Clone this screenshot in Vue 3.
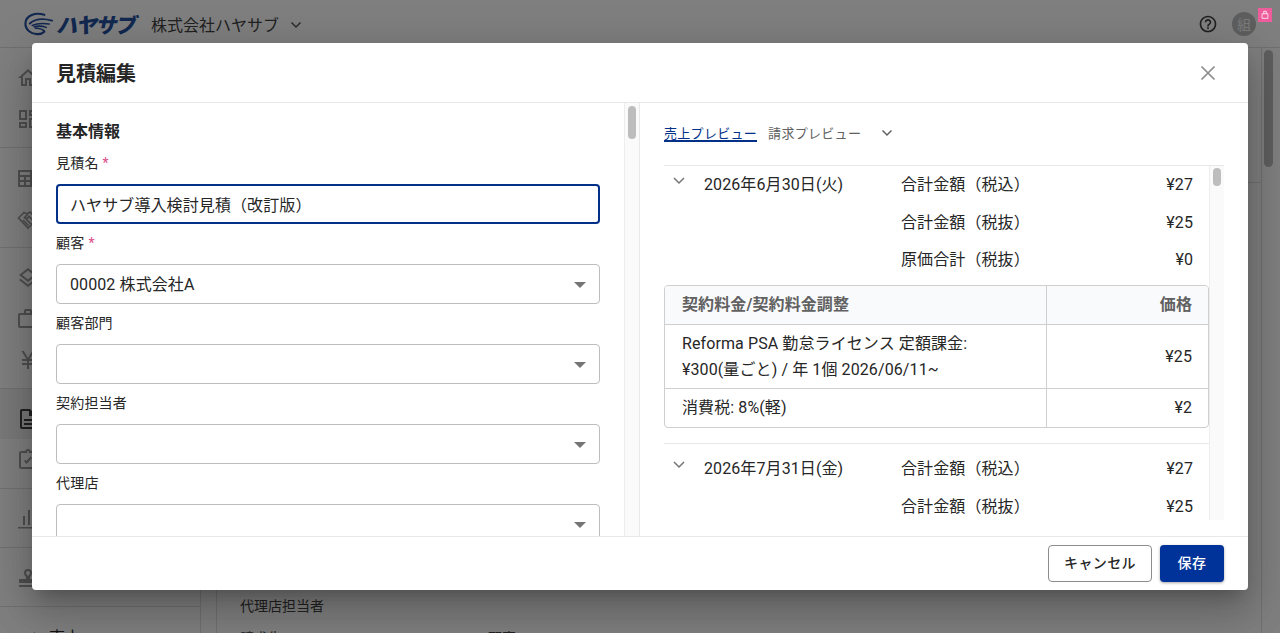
<script setup>
const navGroups = [
  [
    { icon: 'M12 5.69l5 4.5V18h-2v-6H9v6H7v-7.81l5-4.5M12 3L2 12h3v8h6v-6h2v6h6v-8h3L12 3z' },
    { icon: 'M19 5v2h-4V5h4M9 5v6H5V5h4m10 8v6h-4v-6h4M9 17v2H5v-2h4M21 3h-8v6h8V3zM11 3H3v10h8V3zm10 8h-8v10h8V11zm-10 4H3v6h8v-6z' },
  ],
  [
    { icon: 'M2 4h14v3h6v14H2V4zm2 2v3h10V6H4zm0 5v3h4v-3H4zm6 0v3h4v-3h-4zm-6 5v3h4v-3H4zm6 0v3h4v-3h-4zm6-7v10h4V9h-4z' },
    { line: true, icon: 'M2.500 11L8 5.500l3 1.500 3-2 7.500 6.500L12 21zM12 7L8.500 10.500c1 1.200 2.200 1.200 3.200.3L13 9.500l6 6M7 13l5.500 5.500M9.500 11.500l6 6' },
  ],
  [
    { icon: 'M11.990 18.540l-7.370-5.730L3 14.070l9 7 9-7-1.630-1.270-7.380 5.740zM12 16l7.360-5.730L21 9l-9-7-9 7 1.630 1.270L12 16zm0-11.470L17.740 9 12 13.470 6.260 9 12 4.530z' },
    { icon: 'M20 6h-4V4c0-1.110-.89-2-2-2h-4c-1.110 0-2 .89-2 2v2H4c-1.110 0-1.990.89-1.990 2L2 19c0 1.110.89 2 2 2h16c1.110 0 2-.89 2-2V8c0-1.110-.89-2-2-2zm-6 0h-4V4h4v2zm6 13H4V8h16v11z' },
    { icon: 'M5.500 3h2.300L12 10l4.200-7h2.300l-4.900 8H18v2h-5v2h5v2h-5v4h-2v-4H6v-2h5v-2H6v-2h4.400L5.500 3z' },
  ],
  [
    { icon: 'M8 16h8v2H8zm0-4h8v2H8zm6-10H6c-1.100 0-2 .9-2 2v16c0 1.100.89 2 1.990 2H18c1.100 0 2-.9 2-2V8l-6-6zm4 18H6V4h7v5h5v11z', active: true },
    { icon: 'M19 3h-4.180C14.400 1.840 13.300 1 12 1s-2.400.84-2.820 2H5c-1.100 0-2 .9-2 2v14c0 1.100.9 2 2 2h14c1.100 0 2-.9 2-2V5c0-1.100-.9-2-2-2zm-7 0c.55 0 1 .45 1 1s-.45 1-1 1-1-.45-1-1 .45-1 1-1zm7 16H5V5h14v14zM8 13l2.500 3 5.500-6-1.400-1.400-4.100 4.500-1.100-1.300L8 13z' },
  ],
  [{ icon: 'M2 20h19v1.500H2V20zM7 9h2v9H7V9zm5-6h2v15h-2V3zm5 8h2v7h-2v-7z' }],
  [{ icon: 'M12 3a4 4 0 0 1 4 4c0 1.500-1 3-2 4v2h7v4H3v-4h7v-2c-1-1-2-2.500-2-4a4 4 0 0 1 4-4zm0 2a2 2 0 0 0-2 2c0 1 1 2 2 3 1-1 2-2 2-3a2 2 0 0 0-2-2zM3 19h18v2H3v-2z' }],
]

const fields = [
  { label: '見積名', required: true, value: 'ハヤサブ導入検討見積（改訂版）', focused: true },
  { label: '顧客', required: true, value: '00002 株式会社A', select: true },
  { label: '顧客部門', select: true },
  { label: '契約担当者', select: true },
  { label: '代理店', select: true },
]

const sections = [
  {
    date: '2026年6月30日(火)',
    totals: [
      { label: '合計金額（税込）', value: '¥27' },
      { label: '合計金額（税抜）', value: '¥25' },
      { label: '原価合計（税抜）', value: '¥0' },
    ],
    lines: [
      { name: ['Reforma PSA 勤怠ライセンス 定額課金:', '¥300(量ごと) / 年 1個 2026/06/11~'], price: '¥25' },
      { name: ['消費税: 8%(軽)'], price: '¥2' },
    ],
  },
  {
    date: '2026年7月31日(金)',
    totals: [
      { label: '合計金額（税込）', value: '¥27' },
      { label: '合計金額（税抜）', value: '¥25' },
      { label: '原価合計（税抜）', value: '¥0' },
    ],
    lines: [],
  },
]
</script>

<template>
  <div class="page">
    <header class="app-header">
      <div class="logo">
        <svg class="logo__mark" viewBox="0 0 30 26" fill="none" stroke="#24509e" stroke-linecap="round">
          <path d="M21 3.500C12 .5 2 4 1.500 12c-.4 7 6 12 13 11.500 3 0 5-1 6.500-2.500" stroke-width="2.200" />
          <path d="M29 9.500C20 7 11 8 6 12.500" stroke-width="2" />
          <path d="M26 13C20 12 13 12.500 8.500 14.500" stroke-width="1.600" />
          <path d="M23 16.500c-4-1.500-9-1.500-12.500-.5" stroke-width="1.600" />
          <path d="M21 20c-3-2-6-3-9-2.500" stroke-width="1.600" />
        </svg>
        <span class="logo__text">ハヤサブ</span>
      </div>
      <span class="company">株式会社ハヤサブ</span>
      <svg class="company__chevron" viewBox="0 0 12 8" fill="none" stroke="#555" stroke-width="1.500">
        <path d="M1.500 1.500L6 6l4.500-4.500" />
      </svg>
      <div class="app-header__right">
        <svg class="help" viewBox="0 0 24 24" fill="#424242">
          <path d="M11 18h2v-2h-2v2zm1-16C6.480 2 2 6.480 2 12s4.480 10 10 10 10-4.480 10-10S17.520 2 12 2zm0 18c-4.410 0-8-3.590-8-8s3.590-8 8-8 8 3.590 8 8-3.590 8-8 8zm0-14c-2.210 0-4 1.790-4 4h2c0-1.100.9-2 2-2s2 .9 2 2c0 2-3 1.750-3 5h2c0-2.250 3-2.500 3-5 0-2.210-1.790-4-4-4z" />
        </svg>
        <span class="avatar">組</span>
      </div>
    </header>

    <div class="app-body">
      <nav class="sidebar">
        <div v-for="(group, i) in navGroups" :key="i" class="nav-group">
          <div
            v-for="(item, j) in group"
            :key="j"
            class="nav-item"
            :class="{ 'nav-item--active': item.active }"
          >
            <svg class="nav-item__icon" :class="{ 'nav-item__icon--line': item.line }" viewBox="0 0 24 24">
              <path :d="item.icon" />
            </svg>
          </div>
        </div>
        <div class="nav-sales">
          <span class="nav-sales__arrow"></span>
          <span>売上</span>
        </div>
      </nav>
      <main class="main">
        <div class="main__head"></div>
        <div class="main__rows">
          <div class="main__row">代理店担当者</div>
          <div class="main__row main__row--split">
            <span>請求先</span>
            <span>顧客</span>
          </div>
        </div>
      </main>
      <div class="page-scroll"><span class="page-scroll__thumb"></span></div>
    </div>

    <div class="overlay">
      <section class="dialog">
        <header class="dialog__head">
          <h1 class="dialog__title">見積編集</h1>
          <svg class="dialog__close" viewBox="0 0 16 16" fill="none" stroke="#8c8c8c" stroke-width="1.700">
            <path d="M1.500 1.500l13 13M14.500 1.500l-13 13" />
          </svg>
        </header>

        <div class="dialog__body">
          <div class="form-panel">
            <div class="form">
              <h2 class="form__title">基本情報</h2>
              <div v-for="field in fields" :key="field.label" class="field">
                <label class="field__label">
                  {{ field.label }}<span v-if="field.required" class="field__req">*</span>
                </label>
                <div class="field__input" :class="{ 'field__input--focus': field.focused }">
                  <span>{{ field.value }}</span>
                  <span v-if="field.select" class="field__arrow"></span>
                </div>
              </div>
            </div>
            <div class="scrollbar scrollbar--form"><span class="scrollbar__thumb"></span></div>
          </div>

          <div class="preview-panel">
            <div class="tabs">
              <span class="tab tab--active">売上プレビュー</span>
              <span class="tab">請求プレビュー</span>
              <svg class="tabs__chevron" viewBox="0 0 12 8" fill="none" stroke="#616161" stroke-width="1.500">
                <path d="M1.500 1.500L6 6l4.500-4.500" />
              </svg>
            </div>

            <div class="preview">
              <div class="preview__list">
                <div v-for="section in sections" :key="section.date" class="section">
                  <div class="summary">
                    <svg class="summary__chevron" viewBox="0 0 12 8" fill="none" stroke="#757575" stroke-width="1.500">
                      <path d="M1 1l5 5 5-5" />
                    </svg>
                    <div class="summary__date">{{ section.date }}</div>
                    <div class="summary__totals">
                      <div v-for="total in section.totals" :key="total.label" class="total">
                        <span>{{ total.label }}</span>
                        <span>{{ total.value }}</span>
                      </div>
                    </div>
                  </div>
                  <div v-if="section.lines.length" class="lines">
                    <div class="lines__row lines__row--head">
                      <div class="lines__name">契約料金/契約料金調整</div>
                      <div class="lines__price">価格</div>
                    </div>
                    <div v-for="line in section.lines" :key="line.price" class="lines__row">
                      <div class="lines__name">
                        <div v-for="text in line.name" :key="text">{{ text }}</div>
                      </div>
                      <div class="lines__price">{{ line.price }}</div>
                    </div>
                  </div>
                </div>
              </div>
              <div class="scrollbar scrollbar--preview"><span class="scrollbar__thumb"></span></div>
            </div>
          </div>
        </div>

        <footer class="dialog__foot">
          <button class="btn btn--ghost" type="button">キャンセル</button>
          <button class="btn btn--primary" type="button">保存</button>
        </footer>
      </section>
    </div>

    <span class="dev-badge">
      <svg viewBox="0 0 12 12" fill="none" stroke="#fff" stroke-width="0.900">
        <path d="M2.500 4.500h7v5.500h-7zM4.500 4.500v-3h3v3" />
      </svg>
    </span>
  </div>
</template>

<style scoped>
.page {
  position: relative;
  height: 633px;
  overflow: hidden;
  background: #fff;
  color: #262626;
  font-family: Roboto, "Noto Sans CJK JP", sans-serif;
  font-size: 14px;
}

.app-header {
  display: flex;
  align-items: center;
  height: 48px;
  padding-left: 24px;
  border-bottom: 1px solid #e0e0e0;
  box-sizing: border-box;
}

.logo {
  display: flex;
  align-items: center;
  gap: 3px;
}

.logo__mark {
  width: 29px;
  height: 26px;
}

.logo__text {
  color: #24509e;
  font-size: 21px;
  font-style: italic;
  font-weight: 900;
  letter-spacing: -1.500px;
}

.company {
  margin-left: 17px;
  color: #424242;
  font-size: 16px;
}

.company__chevron {
  width: 12px;
  height: 8px;
  margin: 2px 0 0 11px;
}

.app-header__right {
  display: flex;
  align-items: center;
  gap: 14px;
  margin-left: auto;
  padding-right: 24px;
}

.help {
  width: 20px;
  height: 20px;
}

.avatar {
  display: flex;
  align-items: center;
  justify-content: center;
  width: 24px;
  height: 24px;
  border-radius: 50%;
  background: #bdbdbd;
  color: #f5f5f5;
  font-size: 14px;
}

.app-body {
  display: flex;
  height: 585px;
}

.sidebar {
  flex: none;
  width: 201px;
  border-right: 1px solid #e0e0e0;
  box-sizing: border-box;
}

.nav-group {
  padding: 9px 0 8px;
  border-bottom: 1px solid #e0e0e0;
}

.nav-item {
  display: flex;
  align-items: center;
  height: 41px;
  padding-left: 16px;
}

.nav-item--active {
  margin-top: -9px;
  padding-top: 9px;
  background: #f2f2f2;
}

.nav-item__icon {
  width: 24px;
  height: 24px;
  fill: #9e9e9e;
}

.nav-item__icon--line {
  fill: none;
  stroke: #9e9e9e;
  stroke-width: 1.700;
}

.nav-item--active .nav-item__icon {
  fill: #424242;
}

.nav-sales {
  display: flex;
  align-items: center;
  gap: 10px;
  height: 58px;
  padding-left: 34px;
  font-size: 16px;
}

.nav-sales__arrow {
  width: 0;
  height: 0;
  border-top: 4px solid transparent;
  border-bottom: 4px solid transparent;
  border-left: 5px solid #757575;
}

.main {
  flex: 1;
  margin-left: 15px;
  border-left: 1px solid #e0e0e0;
}

.main__head {
  height: 134px;
  border-bottom: 1px solid #e0e0e0;
}

.main__rows {
  padding: 407px 0 0 23px;
  color: #424242;
}

.main__row {
  height: 32px;
  line-height: 32px;
}

.main__row--split {
  display: flex;
  gap: 206px;
}

.page-scroll {
  flex: none;
  width: 14px;
  border-left: 1px solid #e0e0e0;
  padding: 2px 2px 0;
}

.page-scroll__thumb {
  display: block;
  width: 9px;
  height: 117px;
  border-radius: 5px;
  background: #bdbdbd;
}

.overlay {
  position: absolute;
  inset: 0;
  display: flex;
  padding: 43px 32px;
  background: rgba(0, 0, 0, 0.5);
}

.dialog {
  display: flex;
  flex-direction: column;
  width: 100%;
  height: 547px;
  overflow: hidden;
  border-radius: 4px;
  background: #fff;
  box-shadow: 0 11px 15px -7px rgba(0, 0, 0, 0.2), 0 24px 38px 3px rgba(0, 0, 0, 0.14), 0 9px 46px 8px rgba(0, 0, 0, 0.12);
}

.dialog__head {
  display: flex;
  flex: none;
  align-items: center;
  justify-content: space-between;
  height: 60px;
  padding: 0 32px 0 24px;
  border-bottom: 1px solid #e8e8e8;
  box-sizing: border-box;
}

.dialog__title {
  margin: 0;
  font-size: 20px;
  font-weight: 700;
}

.dialog__close {
  width: 16px;
  height: 16px;
}

.dialog__body {
  display: flex;
  flex: 1;
  min-height: 0;
}

.form-panel {
  position: relative;
  flex: none;
  width: 608px;
  overflow: hidden;
  border-right: 1px solid #e8e8e8;
  box-sizing: border-box;
}

.form {
  width: 544px;
  padding-left: 24px;
}

.form__title {
  margin: 0;
  padding: 17px 0 0;
  font-size: 16px;
  font-weight: 700;
  line-height: 24px;
}

.field__label {
  display: block;
  height: 40px;
  letter-spacing: 0.2px;
  line-height: 39px;
}

.field__req {
  margin-left: 4px;
  color: #dd4b87;
}

.field__input {
  display: flex;
  align-items: center;
  justify-content: space-between;
  height: 40px;
  padding: 0 14px 2px 13px;
  border: 1px solid #bdbdbd;
  border-radius: 4px;
  font-size: 16px;
  letter-spacing: 0.1px;
  box-sizing: border-box;
}

.field__input--focus {
  padding: 0 13px 0 12px;
  border: 2px solid #003087;
}

.field__arrow {
  margin: 4px -1px 0 0;
  border-top: 6px solid #757575;
  border-left: 6px solid transparent;
  border-right: 6px solid transparent;
}

.scrollbar {
  position: absolute;
  top: 0;
  right: 0;
  bottom: 0;
  width: 15px;
  border-left: 1px solid #ededed;
  background: #fafafa;
  box-sizing: border-box;
}

.scrollbar__thumb {
  position: absolute;
  left: 3px;
  width: 8px;
  border-radius: 4px;
  background: #bdbdbd;
}

.scrollbar--form .scrollbar__thumb {
  top: 3px;
  height: 33px;
}

.scrollbar--preview .scrollbar__thumb {
  top: 2px;
  height: 18px;
}

.preview-panel {
  flex: 1;
  min-width: 0;
  padding: 0 24px;
}

.tabs {
  display: flex;
  align-items: center;
  height: 62px;
  padding-bottom: 4px;
  box-sizing: border-box;
  font-size: 13px;
}

.tab {
  position: relative;
  margin-right: 11px;
  color: #616161;
  letter-spacing: 0.3px;
}

.tab--active {
  color: #003087;
}

.tab--active::after {
  content: "";
  position: absolute;
  left: 0;
  right: 0;
  bottom: 0;
  height: 2px;
  background: #003087;
}

.tabs__chevron {
  width: 12px;
  height: 8px;
  margin: 1px 0 0 9px;
}

.preview {
  position: relative;
  height: 355px;
  overflow: hidden;
  border-top: 1px solid #e8e8e8;
  box-sizing: border-box;
}

.preview__list {
  width: 545px;
  font-size: 16px;
  letter-spacing: 0.1px;
}

.section {
  padding-bottom: 15px;
  border-bottom: 1px solid #e8e8e8;
}

.section + .section {
  padding-top: 6px;
}

.summary {
  display: flex;
  height: 112.5px;
  padding-right: 16px;
}

.summary__chevron {
  flex: none;
  width: 12px;
  height: 8px;
  margin: 11px 0 0 9px;
}

.summary__date {
  flex: none;
  width: 197px;
  margin-left: 19px;
  line-height: 37.5px;
}

.summary__totals {
  flex: 1;
}

.total {
  display: flex;
  justify-content: space-between;
  line-height: 37.5px;
}

.lines {
  margin-top: 6.5px;
  overflow: hidden;
  border: 1px solid #cfcfcf;
  border-radius: 4px;
}

.lines__row {
  display: flex;
  min-height: 38px;
  border-top: 1px solid #cfcfcf;
  line-height: 26px;
}

.lines__row:first-child {
  border-top: 0;
}

.lines__row--head {
  background: #f9fafb;
  color: #616161;
  font-weight: 700;
}

.lines__name {
  flex: 1;
  padding: 6px 16px 5px 17px;
}

.lines__price {
  display: flex;
  flex: none;
  align-items: center;
  justify-content: flex-end;
  width: 162px;
  padding: 0 16px;
  border-left: 1px solid #cfcfcf;
  box-sizing: border-box;
}

.dialog__foot {
  display: flex;
  flex: none;
  align-items: flex-start;
  justify-content: flex-end;
  gap: 8px;
  height: 54px;
  padding: 8px 24px 0;
  border-top: 1px solid #e8e8e8;
  box-sizing: border-box;
}

.btn {
  height: 37px;
  padding: 0 0 3px;
  border-radius: 4px;
  font-family: inherit;
  font-size: 14px;
  font-weight: 500;
  letter-spacing: 0.4px;
}

.btn--ghost {
  width: 104px;
  border: 1px solid #8c8c8c;
  background: #fff;
  color: #262626;
}

.btn--primary {
  width: 64px;
  border: 0;
  background: #003399;
  color: #fff;
  box-shadow: 0 1px 3px rgba(0, 0, 0, 0.35);
}

.dev-badge {
  position: absolute;
  top: 8px;
  left: 1258px;
  display: flex;
  align-items: center;
  justify-content: center;
  width: 14px;
  height: 14px;
  background: #ef5c9c;
}

.dev-badge svg {
  width: 10px;
  height: 10px;
}
</style>
